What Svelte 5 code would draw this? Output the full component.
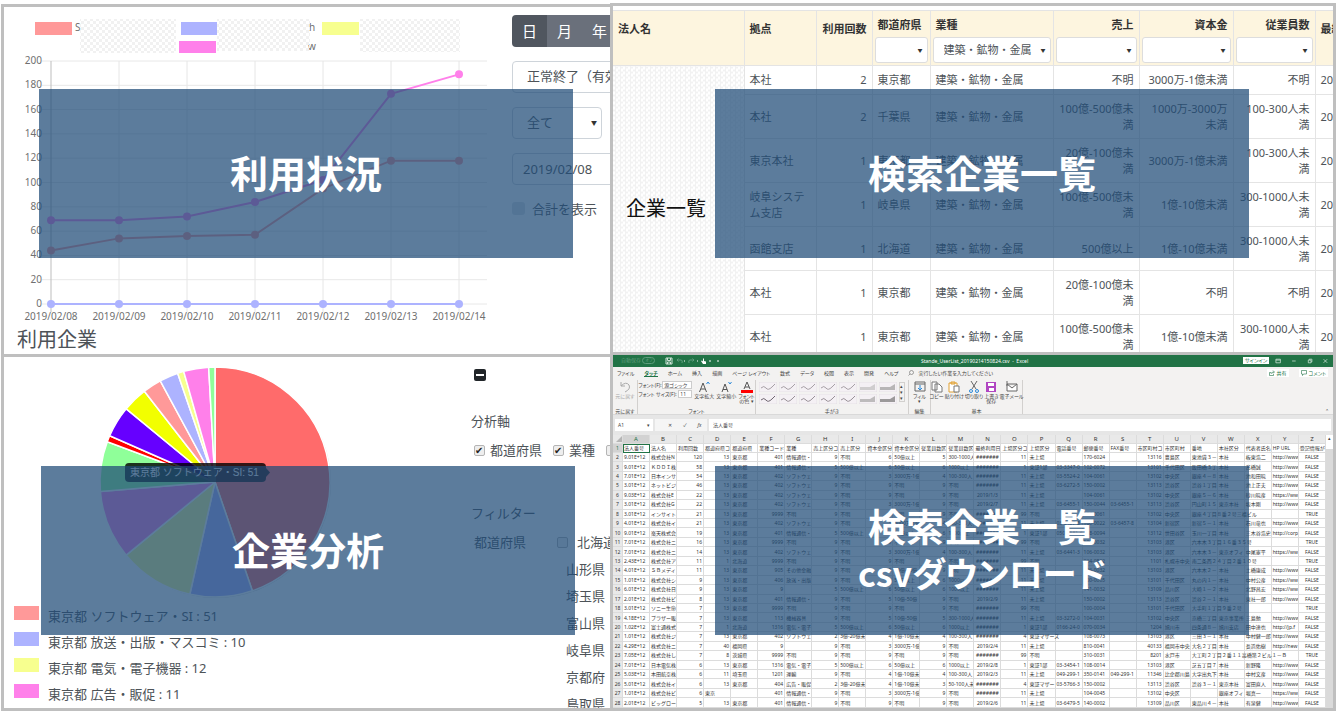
<script lang="ts">
  const days = ["2019/02/08", "2019/02/09", "2019/02/10", "2019/02/11", "2019/02/12", "2019/02/13", "2019/02/14"];
  const ticks = [0, 20, 40, 60, 80, 100, 120, 140, 160, 180, 200];
  const series = [
    { color: "#ff9999", values: [44, 54, 56, 57, 95, 118, 118] },
    { color: "#ff80ea", values: [69, 69, 72, 84, 102, 173, 189] },
    { color: "#adb3ff", values: [0, 0, 0, 0, 0, 0, 0] },
  ];
  const px = (i: number) => 51 + i * 68;
  const py = (v: number) => 304 - v * 1.215;

  const slices = [
    { value: 51, color: "#ff6b6b" },
    { value: 10, color: "#adb3ff" },
    { value: 12, color: "#f7ff8f" },
    { value: 11, color: "#ff80ea" },
    { value: 8, color: "#8fff99" },
    { value: 1, color: "#ff0000" },
    { value: 5, color: "#6600ff" },
    { value: 4, color: "#f2ff00" },
    { value: 3, color: "#ff9999" },
    { value: 3, color: "#adb3ff" },
    { value: 1, color: "#f7ff8f" },
    { value: 4, color: "#ff80ea" },
    { value: 1, color: "#8fff99" },
  ];

  function wedges(cx: number, cy: number, r: number) {
    const total = slices.reduce((sum, s) => sum + s.value, 0);
    let acc = 0;
    return slices.map((s) => {
      const a = (acc / total) * 2 * Math.PI;
      acc += s.value;
      const b = (acc / total) * 2 * Math.PI;
      const x1 = cx + r * Math.sin(a);
      const y1 = cy - r * Math.cos(a);
      const x2 = cx + r * Math.sin(b);
      const y2 = cy - r * Math.cos(b);
      const large = b - a > Math.PI ? 1 : 0;
      return { color: s.color, d: `M${cx} ${cy}L${x1} ${y1}A${r} ${r} 0 ${large} 1 ${x2} ${y2}Z` };
    });
  }

  const pie = wedges(215, 482, 115);

  const legend = [
    { color: "#ff9999", text: "東京都 ソフトウェア・SI : 51" },
    { color: "#adb3ff", text: "東京都 放送・出版・マスコミ : 10" },
    { color: "#f7ff8f", text: "東京都 電気・電子機器 : 12" },
    { color: "#ff80ea", text: "東京都 広告・販促 : 11" },
  ];

  const prefectures = ["山形県", "埼玉県", "富山県", "岐阜県", "京都府", "鳥取県"];

  const columns = [
    { label: "法人名", width: 131 },
    { label: "拠点", width: 72 },
    { label: "利用回数", width: 56, right: true },
    { label: "都道府県", width: 58, filter: "" },
    { label: "業種", width: 123, filter: "建築・鉱物・金属" },
    { label: "売上", width: 86, right: true, filter: "" },
    { label: "資本金", width: 94, right: true, filter: "" },
    { label: "従業員数", width: 82, right: true, filter: "" },
    { label: "最終利用日", width: 18 },
  ];
  const industry = "建築・鉱物・金属";
  const companies = [
    ["本社", "2", "東京都", industry, "不明", "3000万-1億未満", "不明"],
    ["本社", "2", "千葉県", industry, "100億-500億未満", "1000万-3000万未満", "100-300人未満"],
    ["東京本社", "1", "東京都", industry, "20億-100億未満", "3000万-1億未満", "100-300人未満"],
    ["岐阜システム支店", "1", "岐阜県", industry, "100億-500億未満", "1億-10億未満", "300-1000人未満"],
    ["函館支店", "1", "北海道", industry, "500億以上", "1億-10億未満", "300-1000人未満"],
    ["本社", "1", "東京都", industry, "20億-100億未満", "不明", "不明"],
    ["本社", "1", "東京都", industry, "100億-500億未満", "1億-10億未満", "300-1000人未満"],
  ];

  const letters = "ABCDEFGHIJKLMNOPQRSTUVWXYZ".split("");
  const sheet = [
    "法人番号|法人名|利用回数|都道府県コ|都道府県|業種コード|業種|売上区分コ|売上区分|資本金区分|資本金区分|従業員数区|従業員数区|最終利用日|上場区分コ|上場区分|電話番号|郵便番号|FAX番号|市区町村コ|市区町村|番地|本社区分|代表者氏名|HP URL|登記情報が",
    "9.01E+12|株式会社N|120|13|東京都|401|情報通信・|9|不明|6|50億以上|5|300-1000人|#######|11|未上場||170-6024||13116|豊島区|東池袋３－|本社|板東浩二|http://www|FALSE",
    "9.01E+12|ＫＤＤＩ株|58|13|東京都|401|情報通信・|5|500億以上|6|50億以上|6|1000以上|#######|1|東証1部|03-3347-0|102-0072||13101|千代田区|飯田橋３丁|本社|髙橋誠|http://www|FALSE",
    "7.01E+12|日本インサ|54|13|東京都|402|ソフトウェ|9|不明|3|3000万-1億|4|100-300人|#######|11|未上場|03-5524-2|104-0061||13102|中央区|銀座４－８|本社|池和田暁|http://www|FALSE",
    "3.01E+12|ネットビジ|46|13|東京都|402|ソフトウェ|9|不明|9|不明|9|不明|#######|11|未上場|03-6272-5|150-0002||13113|渋谷区|渋谷１丁目|本社|池上正夫|http://www|FALSE",
    "9.03E+12|株式会社E|22|13|東京都|402|ソフトウェ|9|不明|9|不明|9|不明|2019/1/3|11|未上場||104-0061||13102|中央区|銀座５－６|本社|砂川暁彦|https://ww|FALSE",
    "3.01E+12|株式会社G|22|13|東京都|402|ソフトウェ|9|不明|3|3000万-1億|9|不明|2019/2/7|11|未上場|03-6455-1|150-0044|03-6455-1|13113|渋谷区|円山町１５|東京本社|坂本剛|http://www|FALSE",
    "3.01E+12|インサイト|21|13|東京都|9999|不明|9|不明|9|不明|9|不明|#######|99|不明||104-0061||13102|中央区|銀座４丁目８番２号三福ビル||||TRUE",
    "4.01E+12|株式会社イ|21|13|東京都|402|ソフトウェ|9|不明|3|3000万-1億|4|100-300人|#######|11|未上場|03-6457-8|160-0022|03-6457-8|13104|新宿区|新宿５－１|本社|石川竜也|http://www|FALSE",
    "9.01E+12|楽天株式会|19|13|東京都|401|情報通信・|5|500億以上|6|50億以上|6|1000以上|#######|1|東証1部|050-5581-6|158-0094||13112|世田谷区|玉川一丁目|本社|三木谷浩史|http://corp|FALSE",
    "7.01E+12|株式会社ニ|16|13|東京都|9999|不明|9|不明|9|不明|9|不明|#######|99|不明||106-0032||13103|港区|六本木３丁目１６番３５号||||TRUE",
    "7.01E+12|株式会社ニ|14|13|東京都|402|ソフトウェ|9|不明|3|3000万-1億|4|100-300人|#######|11|未上場|03-6441-3|106-0032||13103|港区|六本木３－|東京オフィ|中尾憲平|https://ww|FALSE",
    "2.43E+12|株式会社ア|11|1|北海道|9999|不明|9|不明|9|不明|9|不明|#######|99|不明||064-0802||1101|札幌市中央|南二条西２４丁目２番１０号||||TRUE",
    "4.01E+12|ＳＢメディ|11|13|東京都|905|その他金融|9|不明|5|10億-50億|9|不明|#######|11|未上場||106-0032||13103|港区|六本木２－|本社|土橋康成|http://www|FALSE",
    "1.01E+12|株式会社シ|9|13|東京都|406|放送・出版|9|不明|6|50億以上|6|1000以上|#######|11|未上場||100-0005||13101|千代田区|丸の内１－|本社|中村公彦|https://ww|FALSE",
    "6.01E+12|株式会社日|9|13|東京都|9||5|500億以上|6|50億以上|6|1000以上|#######|11|未上場||141-0032||13109|品川区|大崎１－２|本社|北野昌宏|https://ww|FALSE",
    "2.01E+12|株式会社ビ|8|13|東京都|401|情報通信・|9|不明|5|10億-50億|9|不明|2019/2/9|11|未上場||150-0002||13113|渋谷区|渋谷２－１|本社|東社一郎|http://www|FALSE",
    "3.01E+12|ソニー生命|7|13|東京都|9999|不明|9|不明|9|不明|9|不明|#######|99|不明||100-0004||13101|千代田区|大手町１丁目９番２号||||TRUE",
    "4.18E+12|ブラザー販|7|13|東京都|113|機械器具|9|不明|5|10億-50億|5|300-1000人|#######|11|未上場|03-3272-0|104-0031||13102|中央区|京橋三丁目|東京事業所|三島勉|http://www|FALSE",
    "1.02E+12|富士通株式|7|1|北海道|1316|電気・電子|5|500億以上|6|50億以上|6|1000以上|#######|1|東証1部|0166-24-0|070-0034||1204|旭川市|四条通８－|旭川支店|田中達也|http://jp.f|FALSE",
    "1.01E+12|株式会社ジ|7|13|東京都|402|ソフトウェ|2|3億-20億未|4|1億-10億未|4|100-300人|#######|4|東証マザーズ||108-0073||13103|港区|三田３－１|本社|中村健一郎|http://www|FALSE",
    "4.29E+12|株式会社ニ|7|40|福岡県|9||9|不明|3|3000万-1億|9|不明|2019/2/4|11|未上場||810-0041||40133|福岡市中央|大名２丁目|本社|長浜佑樹|http://new|FALSE",
    "7.05E+12|株式会社し|7|8|茨城県|9999|不明|9|不明|9|不明|9|不明|#######|99|不明||310-0031||8201|水戸市|大工町２丁目２番１１高橋第２ビル１－Ｂ||||TRUE",
    "7.01E+12|日本電気株|6|13|東京都|1316|電気・電子|5|500億以上|6|50億以上|6|1000以上|2019/2/8|1|東証1部|03-3454-1|108-0014||13103|港区|芝五丁目７|本社|新野隆|http://www|FALSE",
    "5.03E+12|本田航空株|6|11|埼玉県|1201|運輸|9|不明|4|1億-10億未|4|100-300人|2019/2/3|11|未上場|049-299-1|350-0141|049-299-1|11346|比企郡川島|大字出丸下|本社|中村文彦|http://www|FALSE",
    "5.01E+12|株式会社イ|6|13|東京都|404|広告・販促|2|3億-20億未|4|1億-10億未|3|50-100人未|#######|4|東証マザー|03-5766-3|150-0002||13113|渋谷区|渋谷３－１|東京本社|富田直人|http://www|FALSE",
    "1.01E+12|株式会社ビ|6|東京||401|情報通信・|9|不明|3|3000万-1億|9|不明|#######|11|未上場||104-0045||13102|中央区||銀座オフィ|堀真一|https://ww|FALSE",
    "2.01E+12|ビッグロー|5|13|東京都|401|情報通信・|9|不明|9|不明|9|不明|2019/2/6|11|未上場|03-6479-5|140-0002||13109|品川区|東品川４－|本社|有泉健|http://www|FALSE",
  ].map((line) => line.split("|"));

  const numeric = new Set([2, 3, 5, 7, 9, 11, 14, 19]);

  function cellClass(row: string[], r: number, c: number) {
    const names: string[] = [];
    if (r > 0 && numeric.has(c) && /^\d/.test(row[c])) names.push("num");
    if (c === 25 || c === 13) names.push("mid");
    // text runs on over empty neighbours, as in any spreadsheet
    if (row[c] && row[c + 1] === "") names.push("spill");
    if (r === 0 && c === 0) names.push("active");
    return names.join(" ");
  }

  const tabs = ["ファイル", "タッチ", "ホーム", "挿入", "描画", "ページ レイアウト", "数式", "データ", "校閲", "表示", "開発", "ヘルプ"];
  const pens = Array.from({ length: 14 }, (_, i) => ({
    block: i % 7 > 4,
    tone: i < 7 ? (i % 7 === 5 ? "#cfcdce" : "#b7b5b6") : i % 7 === 5 ? "#bdbbbc" : "#9b999a",
    ink: i < 7 ? "#9d959c" : i === 7 ? "#5f5560" : "#8d858c",
  }));
</script>

<main class="board">
  <div class="col left">
    <section class="panel usage">
      <div class="usage-body">
        <div>
          <svg class="chart" viewBox="4 7 505 320">
            <defs>
              <pattern id="check" width="6" height="6" patternUnits="userSpaceOnUse">
                <rect width="3" height="3" fill="#f1f1f1" />
                <rect x="3" y="3" width="3" height="3" fill="#f1f1f1" />
              </pattern>
            </defs>
            <rect x="35" y="22" width="37" height="13" fill="#ff9999" />
            <rect x="181" y="22" width="36" height="13" fill="#adb3ff" />
            <rect x="322" y="22" width="37" height="13" fill="#f7ff8f" />
            <rect x="179" y="41" width="37" height="12" fill="#ff80ea" />
            <text x="75" y="31">S</text>
            <text x="309" y="31">h</text>
            <text x="308" y="50">w</text>
            <rect x="80" y="19" width="96" height="34" fill="url(#check)" />
            <rect x="217" y="19" width="93" height="32" fill="url(#check)" />
            <rect x="360" y="19" width="100" height="33" fill="url(#check)" />
            {#each ticks as t}
              <line x1="42" x2="487" y1={py(t)} y2={py(t)} stroke="#e8e8e8" />
              <text x="42" y={py(t) + 3} text-anchor="end">{t}</text>
            {/each}
            {#each days as day, i}
              <line x1={px(i)} x2={px(i)} y1="61" y2="312" stroke={i === 0 ? "#bdbdbd" : "#e6e6e6"} />
              <text x={px(i)} y="320" text-anchor="middle">{day}</text>
            {/each}
            {#each series as s}
              <polyline
                points={s.values.map((v, i) => `${px(i)},${py(v)}`).join(" ")}
                fill="none"
                stroke={s.color}
                stroke-width="2"
              />
              {#each s.values as v, i}
                <circle cx={px(i)} cy={py(v)} r="4" fill={s.color} />
              {/each}
            {/each}
          </svg>
          <h2 class="sub">利用企業</h2>
        </div>
        <form class="side">
          <div class="group">
            <button type="button" class="on">日</button>
            <button type="button">月</button>
            <button type="button">年</button>
          </div>
          <select class="field wide" aria-label="ステータス">
            <option>正常終了（有効）</option>
          </select>
          <div class="pick short">
            <select class="field" aria-label="対象">
              <option>全て</option>
            </select>
          </div>
          <input class="field date wide" type="text" value="2019/02/08" aria-label="開始日" />
          <label class="total"><input type="checkbox" />合計を表示</label>
        </form>
      </div>
      <h1 class="cover">利用状況</h1>
    </section>

    <section class="panel analysis">
      <div class="analysis-body">
        <div>
          <svg class="chart" viewBox="4 357 461 246">
            <circle cx="216" cy="483" r="115" fill="#d9d9d9" />
            {#each pie as w}
              <path d={w.d} fill={w.color} stroke="#fff" stroke-width="1.5" stroke-linejoin="round" />
            {/each}
            <rect x="125" y="463" width="141" height="19" rx="4" fill="#000" fill-opacity="0.8" />
            <path d="M266 468l4 4.500l-4 4.500z" fill="#000" fill-opacity="0.8" />
            <text class="tip" x="130" y="476">東京都 ソフトウェア・SI: 51</text>
          </svg>
          <ul class="legend">
            {#each legend as item}
              <li><span class="swatch" style:background={item.color}></span>{item.text}</li>
            {/each}
          </ul>
        </div>
        <form class="filters">
          <button type="button" class="fold" aria-label="閉じる"></button>
          <h3>分析軸</h3>
          <div class="checks">
            <label><input type="checkbox" checked />都道府県</label>
            <label><input type="checkbox" checked />業種</label>
            <label><input type="checkbox" aria-label="売上" /></label>
          </div>
          <h3 class="second">フィルター</h3>
          <div class="places">
            <span>都道府県</span>
            <ul>
              <li class="first"><label><input type="checkbox" />北海道</label></li>
              {#each prefectures as name}
                <li>{name}</li>
              {/each}
            </ul>
          </div>
        </form>
      </div>
      <h1 class="cover">企業分析</h1>
    </section>
  </div>

  <div class="col right">
    <section class="panel companies">
      <table class="list">
        <colgroup>
          {#each columns as c}
            <col style:width={`${c.width}px`} />
          {/each}
        </colgroup>
        <thead>
          <tr>
            {#each columns as c}
              <th class:right={c.right} class:plain={c.filter === undefined}>
                <span>{c.label}</span>
                {#if c.filter !== undefined}
                  <div class="pick">
                    <select aria-label={c.label}><option>{c.filter}</option></select>
                  </div>
                {/if}
              </th>
            {/each}
          </tr>
        </thead>
        <tbody>
          {#each companies as row, i}
            <tr>
              {#if i === 0}
                <td class="masked" rowspan={companies.length}>企業一覧</td>
              {/if}
              {#each row as cell, j}
                <td class:right={j === 1 || j > 3}>{cell}</td>
              {/each}
              <td class="cut">2019</td>
            </tr>
          {/each}
        </tbody>
      </table>
      <h1 class="cover">検索企業一覧</h1>
    </section>

    <section class="panel excel">
      <header class="titlebar">
        <span class="autosave">自動保存 <i>オフ</i></span>
        <svg class="quick" viewBox="0 0 58 8" fill="none" stroke="#cfe3d7">
          <path d="M1 1h6v6h-6zM2.500 1v2.500h3V1M2.500 7V5h3v2" />
          <path d="M12 3h4q2 0 1 3M13.500 1.500L12 3l1.500 1.500M29 3h-4q-2 0-1 3M27.500 1.500L29 3l-1.500 1.500" stroke="#5f9c7c" />
          <path d="M38 7l-2-3 1-.5 1 1V1.500h1V4l2 .5v2.500z" fill="#fff" stroke="none" />
          <path d="M19 4h1M32 4h1M44 4h2M52 4h2" stroke="#fff" />
        </svg>
        <span class="name">Stande_UserList_20190214150824.csv &nbsp;-&nbsp; Excel</span>
        <button type="button" class="signin">サインイン</button>
        <svg class="winbtns" viewBox="0 0 60 8" fill="none" stroke="#d8eadf">
          <path d="M1 2h5v4H1zM1 3h5M19 4h4M37 3h3v3h-3zM38 3V2h3v3h-1M54 2l4 4M58 2l-4 4" stroke-width="0.8" />
        </svg>
      </header>
      <nav class="tabs">
        {#each tabs as tab}
          <a href="#{tab}" class:current={tab === "タッチ"}>{tab}</a>
        {/each}
        <span class="ask">
          <svg viewBox="0 0 6 6" fill="none" stroke="#666" stroke-width="0.6"><circle cx="3.500" cy="2.500" r="2" /><path d="M2 4L.5 5.500" /></svg>
          実行したい作業を入力してください
        </span>
        <button type="button" class="share">
          <svg viewBox="0 0 6 6" fill="none" stroke="#217346" stroke-width="0.6"><path d="M2 2.500H.5v3h4V4M2 4q0-2 3-2M4 .5L5.500 2 4 3.500" /></svg>
          共有
        </button>
        <button type="button">
          <svg viewBox="0 0 6 6" fill="none" stroke="#217346" stroke-width="0.6"><path d="M.5.5h5v3.500h-3L1.500 5.500V4h-1z" /></svg>
          コメント
        </button>
      </nav>
      <div class="ribbon">
        <div class="tools undo">
          <div class="row">
            <button type="button" class="tool dim">
              <svg viewBox="0 0 12 12" fill="none" stroke="#aaa"><path d="M2 1v4h4M2 5q5-5 8-1 2 4-4 7" /></svg>
              元に戻す
            </button>
          </div>
          <span>元に戻す</span>
        </div>
        <div class="tools font">
          <div class="row">
            <div class="boxes">
              <label>フォント(F): <select><option>源ゴシック</option></select></label>
              <label>フォント サイズ(F): <select class="tiny"><option>11</option></select></label>
            </div>
            <button type="button" class="tool">
              <svg viewBox="0 0 12 12" fill="none" stroke="#555"><path d="M1.500 11L5 2l3.500 9M3 8h4" /><path d="M8.500 3l1.500-2 1.500 2" stroke="#2b88d8" /></svg>
              文字拡大
            </button>
            <button type="button" class="tool">
              <svg viewBox="0 0 12 12" fill="none" stroke="#555"><path d="M2 11l3-8 3 8M3 8.500h4" /><path d="M8.500 1L10 3l1.500-2" stroke="#2b88d8" /></svg>
              文字縮小
            </button>
            <button type="button" class="tool">
              <svg viewBox="0 0 12 12" fill="none" stroke="#555"><path d="M3 8l3-7 3 7M4 6h4" /><path d="M0 10.500h12" stroke="#f00" stroke-width="3" /></svg>
              フォント<br />の色 ▾
            </button>
          </div>
          <span>フォント</span>
        </div>
        <div class="tools ink">
          <div class="row">
            <div class="pens">
              {#each pens as p}
                <svg viewBox="0 0 18 10">
                  <rect width="18" height="10" fill="#f4f0f4" stroke="#d8d4d8" stroke-width="0.5" />
                  {#if p.block}
                    <path d="M1 5h10l5-3v6H1z" fill={p.tone} />
                  {:else}
                    <path d="M2 6q3-3 5 0t6-1l3-3" fill="none" stroke={p.ink} stroke-width="0.9" />
                  {/if}
                </svg>
              {/each}
            </div>
            <div class="scroll"><span>▴</span><span>▾</span><span>▾</span></div>
          </div>
          <span>手がき</span>
        </div>
        <div class="tools fill">
          <div class="row">
            <button type="button" class="tool">
              <svg viewBox="0 0 12 12" fill="none" stroke="#666"><path d="M1 1h10v9H1zM1 3h10" /><path d="M6 4v5M4 7l2 2 2-2" stroke="#2b88d8" /></svg>
              フィル<br />▾
            </button>
          </div>
          <span>編集</span>
        </div>
        <div class="tools basic">
          <div class="row">
            <button type="button" class="tool">
              <svg viewBox="0 0 12 12" fill="#fff" stroke="#777"><path d="M1 1h5v8H1zM4 3h4l3 3v5H4z" /></svg>
              コピー
            </button>
            <button type="button" class="tool">
              <svg viewBox="0 0 12 12" fill="#fff" stroke="#e0a030"><path d="M1 2h8v9H1zM3 1h4v2H3z" /><path d="M6 5h5v6H6z" stroke="#777" /></svg>
              貼り付け
            </button>
            <button type="button" class="tool">
              <svg viewBox="0 0 12 12" fill="none" stroke="#666"><path d="M3 0l5 8M9 0L4 8" /><g stroke="#2b88d8"><circle cx="3" cy="10" r="1.500" /><circle cx="9" cy="10" r="1.500" /></g></svg>
              切り取り
            </button>
            <button type="button" class="tool">
              <svg viewBox="0 0 12 12"><path d="M1 1h10v10H1z" fill="#b146c2" /><path d="M3 2h6v3H3zM4 7h5v3H4z" fill="#fff" /></svg>
              上書き<br />保存
            </button>
            <button type="button" class="tool">
              <svg viewBox="0 0 12 12" fill="#fff" stroke="#666"><path d="M1 3h10v7H1zM1 3l5 4 5-4" /><path d="M1 5V0" fill="none" /></svg>
              電子メール
            </button>
          </div>
          <span>基本</span>
        </div>
        <span class="collapse">⌃</span>
      </div>
      <div class="formula">
        <div class="cellname">A1<span>▾</span></div>
        <span class="marks"><span>✕</span><span>✓</span><i>fx</i></span>
        <input type="text" value="法人番号" aria-label="数式バー" />
      </div>
      <div class="grid">
        <table>
          <colgroup>
            <col class="rowno" />
            {#each letters as _}<col />{/each}
          </colgroup>
          <thead>
            <tr>
              <th class="corner" aria-label="すべて選択">
                <svg viewBox="0 0 6 6"><path d="M6 0v6H0z" fill="#b5b5b5" /></svg>
              </th>
              {#each letters as l, i}<th class:current={i === 0}>{l}</th>{/each}
            </tr>
          </thead>
          <tbody>
            {#each sheet as row, r}
              <tr>
                <th class:current={r === 0}>{r + 1}</th>
                {#each row as cell, c}<td class={cellClass(row, r, c)}>{cell}</td>{/each}
              </tr>
            {/each}
          </tbody>
        </table>
        <div class="vbar"><span>▴</span></div>
      </div>
      <h1 class="cover"><span>検索企業一覧<br /><small>csvダウンロード</small></span></h1>
    </section>
  </div>
</main>

<style>
  :global(body) {
    background: #fff;
  }
  .board,
  .board * {
    box-sizing: border-box;
  }
  .board {
    height: 100vh;
    padding: 3px 1px;
    display: grid;
    grid-template-columns: 609fr 726fr;
    font-family: "Noto Sans", "Noto Sans CJK JP", sans-serif;
    color: #4d5358;
  }
  button,
  input,
  select {
    font: inherit;
    color: inherit;
    margin: 0;
  }
  h1,
  h2,
  h3,
  ul {
    margin: 0;
    padding: 0;
    font-weight: normal;
    list-style: none;
  }
  .col {
    display: flex;
    flex-direction: column;
    gap: 3px;
    min-width: 0;
    background: #bfbfbf;
  }
  .left {
    margin-top: 1px;
    padding: 3px 0 3px 3px;
  }
  .right.col {
    padding: 3px;
  }
  .panel {
    position: relative;
    overflow: hidden;
    background: #fff;
    min-height: 0;
    flex: 347 1 0;
  }
  .analysis {
    flex-grow: 351;
  }
  .excel {
    flex-grow: 355;
  }
  .cover {
    position: absolute;
    top: 82px;
    left: 35px;
    right: 37px;
    height: 169px;
    padding-bottom: 4px;
    display: flex;
    align-items: center;
    justify-content: center;
    text-align: center;
    background: rgba(31, 76, 119, 0.73);
    color: #fff;
    font-family: "Noto Sans CJK JP", sans-serif;
    font-size: 38px;
    line-height: 46px;
    font-weight: bold;
    font-feature-settings: "palt";
  }
  .cover small {
    font-size: 34px;
  }
  .right .cover {
    top: 83px;
    left: 102px;
    right: 84px;
  }
  .analysis .cover {
    top: 109px;
    left: 37px;
    right: 35px;
  }
  .excel .cover {
    top: 111px;
    padding-bottom: 2px;
  }

  /* usage */
  .usage-body {
    display: grid;
    grid-template-columns: 5fr 1fr;
  }
  .chart {
    display: block;
    width: 100%;
  }
  .chart text {
    font-size: 10px;
    fill: #707070;
  }
  .chart .tip {
    font-family: "Liberation Sans", "Noto Sans CJK JP", sans-serif;
    fill: #fff;
  }
  .sub {
    padding-left: 13px;
    font-size: 20px;
    line-height: 26px;
  }
  .side {
    display: flex;
    flex-direction: column;
    gap: 14px;
    padding: 8px 0 0 3px;
    font-size: 13px;
    min-width: 0;
  }
  .group {
    display: flex;
    width: max-content;
    border-radius: 4px;
    overflow: hidden;
  }
  .group button {
    width: 35px;
    height: 32px;
    padding: 0 0 2px;
    border: 0;
    background: #6a707b;
    color: #fff;
    font-size: 15px;
  }
  .group .on {
    background: #50565f;
  }
  .field {
    appearance: none;
    width: 100%;
    height: 32px;
    padding: 0 14px 2px;
    border: 1px solid #ced4da;
    border-radius: 4px;
    background: #fff;
  }
  .wide {
    width: 140px;
  }
  .short {
    width: 90px;
  }
  .date {
    padding: 0 10px;
  }
  .pick {
    position: relative;
  }
  .pick::after {
    content: "▼";
    position: absolute;
    right: 5px;
    top: 50%;
    transform: translateY(-50%);
    font-size: 5px;
    line-height: 6px;
    color: #333;
    pointer-events: none;
  }
  .short::after {
    font-size: 6px;
  }
  .total {
    display: flex;
    align-items: center;
    gap: 7px;
    height: 18px;
    white-space: nowrap;
  }
  .total input {
    appearance: none;
    width: 13px;
    height: 13px;
    border-radius: 3px;
    background: #dee2e6;
  }

  /* analysis */
  .analysis-body {
    display: grid;
    grid-template-columns: 461fr 145fr;
    font-size: 13px;
    line-height: 20px;
  }
  .legend li {
    display: flex;
    gap: 9px;
    height: 26px;
    padding-left: 10px;
    padding-top: 3px;
    white-space: nowrap;
  }
  .swatch {
    width: 25px;
    height: 14px;
  }
  .filters {
    padding: 12px 0 0 6px;
    min-width: 0;
    white-space: nowrap;
  }
  .fold {
    display: flex;
    align-items: center;
    width: 12px;
    height: 12px;
    margin-left: 3px;
    padding: 0 2px;
    border: 0;
    border-radius: 2px;
    background: #212529;
  }
  .fold::before {
    content: "";
    flex: 1;
    height: 2px;
    background: #fff;
  }
  .filters h3 {
    margin-top: 30px;
    font-size: 13px;
  }
  .filters .second {
    margin-top: 43px;
  }
  .checks {
    display: flex;
    gap: 11px;
    margin: 9px 0 0 3px;
  }
  .filters label {
    display: flex;
    align-items: center;
    gap: 5px;
  }
  .filters input {
    appearance: none;
    flex: none;
    width: 11px;
    height: 11px;
    border: 1px solid #b5b5b5;
    border-radius: 2px;
    background: #eee;
  }
  .filters input:checked::before {
    content: "✔";
    display: block;
    font-size: 10px;
    line-height: 9px;
    color: #222;
  }
  .places {
    display: flex;
    margin: 6px 0 0 3px;
    line-height: 27px;
  }
  .places > span {
    flex: none;
    width: 80px;
  }
  .places li {
    padding-left: 12px;
  }
  .places .first {
    padding-left: 3px;
  }
  .places label {
    gap: 9px;
  }

  /* company list */
  .list {
    width: 100%;
    margin-top: 4px;
    table-layout: fixed;
    border-collapse: collapse;
    font-size: 11px;
    line-height: 16px;
  }
  .list th,
  .list td {
    padding: 5px;
    border: 1px solid #e4e4e4;
    text-align: left;
    word-break: break-all;
  }
  .list th:first-child,
  .list td.masked {
    border-left: 0;
  }
  .list th {
    height: 55px;
    padding: 6px 2px 2px;
    vertical-align: top;
    background: #fdf5df;
    color: #333;
    overflow: hidden;
    white-space: nowrap;
  }
  .list th.plain {
    padding-top: 10px;
  }
  .list th span {
    display: block;
    padding: 0 3px;
  }
  .list td {
    height: 44px;
  }
  .list tbody tr:first-child td:not(.masked) {
    height: 29px;
  }
  .list th.right,
  .list td.right {
    text-align: right;
  }
  .list .pick {
    margin-top: 4px;
  }
  .list select {
    appearance: none;
    display: block;
    width: 100%;
    height: 26px;
    padding: 0 10px;
    border: 1px solid #ddd;
    border-radius: 3px;
    background: #fff;
    font-weight: normal;
    color: #4d5358;
  }
  .list td.masked {
    padding: 0 0 6px 13px;
    background: repeating-conic-gradient(#f2f2f2 0 25%, #fff 0 50%) 0 0 / 5px 5px;
    font-size: 20px;
    color: #111;
    white-space: nowrap;
  }
  .list td.cut {
    overflow: hidden;
    white-space: nowrap;
    word-break: normal;
  }

  /* spreadsheet */
  .excel {
    display: flex;
    flex-direction: column;
    background: #e6e6e6;
    font-size: 5px;
    line-height: 6px;
    color: #444;
  }
  .titlebar,
  .tabs,
  .ribbon,
  .formula {
    flex: none;
    font-feature-settings: "palt";
    white-space: nowrap;
  }
  .titlebar {
    display: grid;
    grid-template-columns: 44px 58px 1fr 26px 60px;
    align-items: center;
    height: 12px;
    padding: 0 4px 0 8px;
    background: #217346;
    color: #fff;
  }
  .autosave {
    color: #5f9c7c;
  }
  .autosave i {
    padding: 0 2px;
    border: 1px solid #5f9c7c;
    border-radius: 4px;
    font-style: normal;
    font-size: 4px;
  }
  .quick,
  .winbtns {
    height: 8px;
  }
  .name {
    padding-left: 198px;
  }
  .signin {
    height: 7px;
    padding: 0;
    border: 0;
    background: #fff;
    color: #217346;
    line-height: 7px;
  }
  .winbtns {
    width: 60px;
    padding-left: 6px;
  }
  .tabs {
    display: flex;
    align-items: center;
    gap: 10px;
    height: 13px;
    padding: 0 5px 0 4px;
    background: #f3f2f1;
  }
  .tabs a {
    color: inherit;
    text-decoration: none;
  }
  .tabs a.current {
    border-bottom: 1px solid #217346;
    color: #217346;
    font-weight: bold;
  }
  .ask {
    display: flex;
    gap: 4px;
  }
  .tabs svg {
    width: 6px;
    height: 6px;
  }
  .tabs button {
    display: flex;
    align-items: center;
    gap: 2px;
    height: 8px;
    padding: 0 2px;
    border: 0;
    background: #fff;
    color: #217346;
  }
  .tabs .share {
    margin-left: auto;
  }
  .ribbon {
    display: flex;
    height: 35px;
    background: #f3f2f1;
    border-bottom: 1px solid #d9d9d9;
  }
  .tools {
    display: flex;
    flex-direction: column;
    justify-content: space-between;
    align-items: center;
    padding: 1px 1px 0;
    border-right: 1px solid #d2d0ce;
  }
  .row {
    display: flex;
    align-items: flex-start;
    gap: 2px;
  }
  .undo {
    width: 25px;
  }
  .font {
    width: 118px;
  }
  .ink {
    width: 153px;
  }
  .fill {
    width: 22px;
  }
  .basic {
    width: 92px;
  }
  .tool {
    padding: 0;
    border: 0;
    background: none;
    line-height: 5px;
    text-align: center;
  }
  .basic .row {
    gap: 1px;
  }
  .tool svg {
    display: block;
    width: 12px;
    height: 12px;
    margin: 0 auto 1px;
  }
  .dim {
    color: #aaa;
  }
  .boxes {
    display: flex;
    flex-direction: column;
    gap: 1px;
    width: 54px;
  }
  .boxes label {
    display: flex;
    justify-content: space-between;
    align-items: center;
  }
  .boxes select {
    appearance: none;
    width: 30px;
    height: 8px;
    padding: 0 1px;
    border: 1px solid #ccc;
    background: #fff;
  }
  .boxes .tiny {
    width: 14px;
  }
  .pens {
    display: grid;
    grid-template-columns: repeat(7, 18px);
    gap: 2px;
    padding-top: 1px;
  }
  .pens svg {
    width: 18px;
    height: 10px;
  }
  .scroll {
    display: grid;
    width: 6px;
    margin-top: 1px;
    border: 1px solid #d2d0ce;
  }
  .collapse {
    margin: auto 4px 0 auto;
  }
  .formula {
    display: flex;
    gap: 2px;
    height: 20px;
    padding: 4px 2px;
    font-size: 5px;
    line-height: 12px;
  }
  .cellname {
    display: flex;
    justify-content: space-between;
    width: 38px;
    padding: 0 3px;
    background: #fff;
  }
  .marks {
    display: flex;
    justify-content: space-around;
    width: 52px;
    padding-left: 8px;
    background: #f5f5f5;
  }
  .formula input {
    flex: 1;
    min-width: 0;
    padding: 0 4px;
    border: 0;
    background: #fff;
  }
  .grid {
    display: flex;
    flex: 1;
    min-height: 0;
  }
  .grid table {
    flex: 1;
    width: 100%;
    height: 100%;
    min-width: 0;
    table-layout: fixed;
    border-collapse: separate;
    border-spacing: 0;
    background: #fff;
    font-size: 5px;
    line-height: 8px;
    color: #333;
  }
  .grid .rowno {
    width: 10px;
  }
  .grid th,
  .grid td {
    padding: 0 1px;
    border-right: 1px solid #dcdcdc;
    border-bottom: 1px solid #dcdcdc;
    overflow: hidden;
    white-space: nowrap;
    text-align: left;
  }
  .grid th {
    padding: 0;
    background: #e9e9e9;
    font-weight: normal;
    text-align: center;
  }
  .grid thead th {
    font-size: 6px;
  }
  .grid .corner svg {
    display: block;
    width: 6px;
    height: 6px;
    margin-left: auto;
  }
  .grid th.current {
    background: #d2d2d2;
    color: #217346;
  }
  .grid td.num {
    text-align: right;
  }
  .grid td.mid {
    text-align: center;
  }
  .grid td.spill {
    overflow: visible;
  }
  .grid td.active {
    outline: 1px solid #217346;
    outline-offset: -1px;
  }
  .vbar {
    width: 7px;
    flex: none;
    background: #dadada;
    text-align: center;
  }
  .vbar span {
    display: block;
    height: 14px;
    background: #fff;
  }
</style>
